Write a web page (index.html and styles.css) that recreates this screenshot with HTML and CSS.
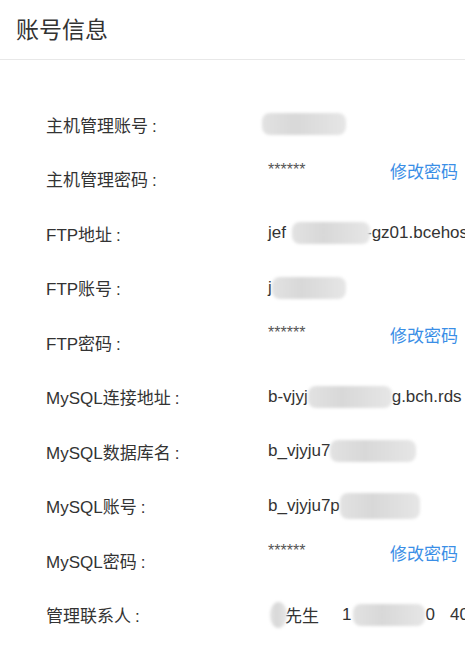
FILE: index.html
```html
<!DOCTYPE html>
<html lang="zh-CN">
<head>
<meta charset="utf-8">
<title>账号信息</title>
<link rel="stylesheet" href="styles.css">
</head>
<body>
<div class="page">
  <div class="header"><h1 class="title">账号信息</h1></div>
  <div class="list">
    <div class="row">
      <div class="label">主机管理账号<span class="colon">:</span></div>
      <div class="value"><span class="blur b-acc"></span></div>
    </div>
    <div class="row pw">
      <div class="label">主机管理密码<span class="colon">:</span></div>
      <div class="value"><span class="stars">******</span><a class="link" href="#">修改密码</a></div>
    </div>
    <div class="row">
      <div class="label">FTP地址<span class="colon">:</span></div>
      <div class="value">jef<span class="blur b-ftpaddr"></span>-gz01.bcehos</div>
    </div>
    <div class="row">
      <div class="label">FTP账号<span class="colon">:</span></div>
      <div class="value">j<span class="blur b-ftpacc"></span></div>
    </div>
    <div class="row pw">
      <div class="label">FTP密码<span class="colon">:</span></div>
      <div class="value"><span class="stars">******</span><a class="link" href="#">修改密码</a></div>
    </div>
    <div class="row">
      <div class="label">MySQL连接地址<span class="colon">:</span></div>
      <div class="value">b-vjyj<span class="blur b-sqladdr"></span>g.bch.rds</div>
    </div>
    <div class="row">
      <div class="label">MySQL数据库名<span class="colon">:</span></div>
      <div class="value">b_vjyju7<span class="blur b-sqldb"></span></div>
    </div>
    <div class="row">
      <div class="label">MySQL账号<span class="colon">:</span></div>
      <div class="value">b_vjyju7p<span class="blur b-sqlacc"></span></div>
    </div>
    <div class="row pw">
      <div class="label">MySQL密码<span class="colon">:</span></div>
      <div class="value"><span class="stars">******</span><a class="link" href="#">修改密码</a></div>
    </div>
    <div class="row">
      <div class="label">管理联系人<span class="colon">:</span></div>
      <div class="value"><span class="name"><span class="blur b-name"></span>先生</span><span class="phone">1<span class="blur b-phone"></span>0</span><span class="tel">40</span></div>
    </div>
  </div>
</div>
</body>
</html>
```

FILE: styles.css
```css
html, body {
  margin: 0;
  padding: 0;
  background: #ffffff;
  overflow: hidden;
}

body {
  font-family: "Liberation Sans", "Noto Sans CJK SC", sans-serif;
  color: #333333;
}

.page {
  width: 465px;
  overflow: hidden;
}

.header {
  height: 60px;
  border-bottom: 1px solid #e8e8e8;
  display: flex;
  align-items: center;
  padding-left: 16px;
  padding-bottom: 4px;
  box-sizing: border-box;
}

.title {
  margin: 0;
  font-size: 23px;
  font-weight: normal;
  color: #333333;
  font-family: "Noto Sans CJK SC", sans-serif;
}

.list {
  padding-top: 37px;
}

.row {
  display: flex;
  align-items: center;
  height: 54.5px;
  font-size: 17px;
}

.label {
  width: 222px;
  padding-left: 46px;
  flex: none;
  color: #333333;
}

.colon {
  margin-left: 4px;
}

.value {
  display: flex;
  align-items: center;
  white-space: nowrap;
  color: #333333;
}

.row.pw .value {
  margin-bottom: 16px;
}

.stars {
  width: 122px;
  color: #555555;
  font-size: 16px;
  padding-bottom: 2px;
}

.link {
  color: #3a8ee6;
  text-decoration: none;
  font-family: "Noto Sans CJK SC", sans-serif;
}

.blur {
  display: inline-block;
  height: 22px;
  border-radius: 8px;
  background: linear-gradient(90deg, #e2e2e2, #d8d8d8 40%, #e6e6e6);
  filter: blur(1.5px);
}

.b-acc { width: 84px; margin-left: -6px; }
.b-ftpaddr { width: 78px; margin-left: 6px; margin-right: -4px; }
.b-ftpacc { width: 74px; }
.b-sqladdr { width: 84px; margin-left: 0; }
.b-sqldb { width: 86px; }
.b-sqlacc { width: 80px; height: 26px; }
.b-name { width: 17px; height: 26px; border-radius: 50%; margin-left: 2px; margin-right: -2px; }
.b-phone { width: 72px; margin-left: 2px; margin-right: 0; }

.name {
  width: 74px;
  display: inline-flex;
  align-items: center;
}

.phone {
  width: 108px;
  display: inline-flex;
  align-items: center;
}
```
